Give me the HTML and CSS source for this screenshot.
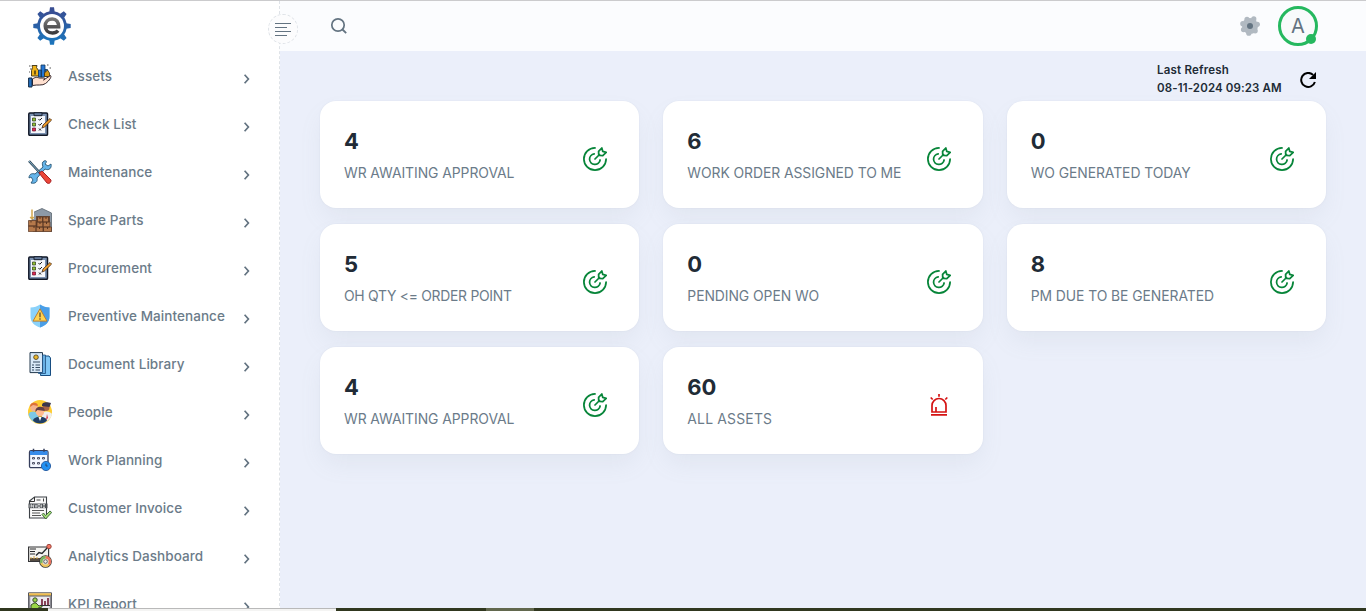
FILE: index.html
```html
<!DOCTYPE html>
<html lang="en">
<head>
<meta charset="utf-8">
<title>Dashboard</title>
<link rel="stylesheet" href="styles.css">
</head>
<body>
<svg class="defs" aria-hidden="true">
  <symbol id="target" viewBox="0 0 24 24"><g fill="none" stroke="currentColor" stroke-width="1.75" stroke-linecap="round" stroke-linejoin="round"><path d="M12 .9A11.1 11.1 0 1 0 23.1 12"/><path d="M11.2 6.9A5.3 5.3 0 1 0 17.1 13"/><path d="M12 12l4.5-4.5M15.6 4.4l3.2-3.4.9 3.3 3.5 1.1-3.4 3.2-3.2-.3-.9-.9z"/></g></symbol>
  <symbol id="checklist" viewBox="0 0 24 24"><rect x=".8" y="1" width="18.7" height="22.3" rx="1" fill="#7b92b2" stroke="#111827" stroke-width="1.5"/><path d="M3 4h14v17H3z" fill="#f5f7fb"/><path d="M6 .7h8v3H6z" fill="#647b9c" stroke="#18202e"/><path d="M4.5 6h3v3h-3zM4.5 11h3v3h-3z" fill="#96c431" stroke="#28371e" stroke-width=".7"/><path d="M4.5 16h3v3h-3z" fill="#e02b54" stroke="#641029" stroke-width=".7"/><path d="M10.5 7l1.2 1.3L14 6M10.5 12l1.2 1.3L14 11M11 16.5l2 2m0-2l-2 2" fill="none" stroke="#222" stroke-width="1"/><path d="M14 16l1-3 7-6.5 1.6 1.6-7 6.8z" fill="#f6a12b" stroke="#3a2315" stroke-width=".8"/></symbol>
  <symbol id="chevron" viewBox="0 0 8 12"><path d="M1.6 1.8l3.8 4.2-3.8 4.2" fill="none" stroke="#637381" stroke-width="1.7"/></symbol>
</svg>
<div class="app">
  <aside class="sidebar">
    <div class="brand">
      <svg class="logo" viewBox="0 0 38 38"><defs><linearGradient id="blue" x2="0" y2="1"><stop stop-color="#394c91"/><stop offset="1" stop-color="#1b75bc"/></linearGradient><linearGradient id="gray" x2="0" y2="1"><stop stop-color="#777"/><stop offset="1" stop-color="#3c3c3e"/></linearGradient></defs><g fill="url(#blue)"><circle cx="19" cy="19" r="14.8"/><path d="M16.3 5L17 .3h4l.7 4.7zM16.3 33l.7 4.7h4l.7-4.7zM5 16.3l-4.7.7v4l4.7.7zM33 16.3l4.7.7v4l-4.7.7zM7.1 10.9L4.4 7l2.8-2.8 3.9 2.9zM30.9 10.9L33.6 7l-2.8-2.8-3.9 2.9zM7.1 27.1L4.4 31l2.8 2.8 3.9-2.9zM30.9 27.1l2.7 3.9-2.8 2.8-3.9-2.9z"/></g><circle cx="19" cy="19" r="12" fill="#fff"/><path d="M12.5 19.8h13.2c.1-5-2.4-7.8-6.4-7.8-4.2 0-7.1 2.9-7.1 7s2.8 7 7.3 7c2.4 0 4.3-.8 5.6-2.3" fill="none" stroke="url(#gray)" stroke-width="3.5"/></svg>
    </div>
    <nav class="menu">
      <a class="item"><svg class="pic" viewBox="0 0 24 24"><path d="M4.5 3.5L4 1.5h5l-.5 2 2 3V12h-7V6.5z" fill="#efb31a" stroke="#3c3215" stroke-width=".9"/><path d="M10.5 6h3v7h-3zM13 1h4v12h-4zM17 5.5h2.5v7H17z" fill="#2577d6" stroke="#173756" stroke-width=".8"/><path d="M7 6.5v4" stroke="#4d3d13" stroke-width="1.6"/><path d="M16.5 9l3-3 2 3v3.5h-5z" fill="#d99a18" stroke="#3d3214" stroke-width=".8"/><path d="M4.5 15c3.5-2.5 5-1.5 7-1h4c1.5 0 1.5 2 0 2l7-4.5c1.5 1-1 5-5 8-3 2.5-8 .8-13 2z" fill="#ffe0cf" stroke="#33252a"/><path d="M.6 14H4v9H.6z" fill="#246fbe" stroke="#132b45"/><path d="M1 2h1.5M2 5h1.5M19 1h1.5M21.5 4H23M1 8h1" stroke="#555"/></svg><span class="name">Assets</span><svg class="chev"><use href="#chevron"/></svg></a>
      <a class="item"><svg class="pic"><use href="#checklist"/></svg><span class="name">Check List</span><svg class="chev"><use href="#chevron"/></svg></a>
      <a class="item"><svg class="pic" viewBox="0 0 24 24"><path d="M16 1c3-1 3 1 1 3l3 2 3-2c1 4-2 7-6 5L9 18c1 4-2 6-6 5l2-3-2-3-2 1c0-4 3-5 6-4l8-7c-1-3-1-5 1-6z" fill="#65b5ea" stroke="#275574" stroke-width=".9"/><path d="M1 1l12 13" stroke="#2e4658" stroke-width="2.5"/><path d="M1 1l12 13" stroke="#87b3ca"/><path d="M11 13l3-2 9 9c0 3-2 4-4 3z" fill="#ec4738" stroke="#a62125"/></svg><span class="name">Maintenance</span><svg class="chev"><use href="#chevron"/></svg></a>
      <a class="item"><svg class="pic" viewBox="0 0 24 24"><path d="M4 5l10-4.5L23.5 5v18.5H5z" fill="#8d99a6" stroke="#5b6670" stroke-width=".8"/><path d="M8 8h14v4H8z" fill="#6a4a36"/><path d="M8 12h14v11H8z" fill="#694228"/><g fill="#b5794b" stroke="#553422" stroke-width=".7"><path d="M9.5 9h5v5h-5zM15 9h5.5v5H15zM9 14h6v5H9zM15 14h7v5h-7zM.5 12.5H8V18H.5zM.5 18H8v5.700H.5zM8 19h7v4.700H8zM15.5 19h8v4.700h-8z"/></g><path d="M3 12.500v2M6 18v2M12 9v2M18 9v2M12 14v2M18.500 14v2M11.500 19v2M19.500 19v2" stroke="#59351f"/><path d="M4 .5V11" stroke="#fff" stroke-width="4"/><path d="M4 1.500V11m-1.800-2L4 11l1.800-2" fill="none" stroke="#d3a84f" stroke-width="1.500"/></svg><span class="name">Spare Parts</span><svg class="chev"><use href="#chevron"/></svg></a>
      <a class="item"><svg class="pic"><use href="#checklist"/></svg><span class="name">Procurement</span><svg class="chev"><use href="#chevron"/></svg></a>
      <a class="item"><svg class="pic" viewBox="0 0 24 24"><path d="M12 .5c3 2 6 3 9.500 3v9c0 6-4 9-9.500 11-5.500-2-9.500-5-9.500-11v-9c4 0 6.500-1 9.500-3z" fill="#8bd2fa"/><path d="M12 .5c3 2 6 3 9.500 3v9c0 6-4 9-9.500 11z" fill="#4a9ee7"/><path d="M12 4.800l7 12.300H5z" fill="#ffd34f" stroke="#bc7e2e" stroke-linejoin="round"/><path d="M12 8.500v4.700m0 1v1.500" stroke="#4c4131" stroke-width="1.200"/></svg><span class="name">Preventive Maintenance</span><svg class="chev"><use href="#chevron"/></svg></a>
      <a class="item"><svg class="pic" viewBox="0 0 24 24"><path d="M14 4h7l1.500 2v17.500H12.500z" fill="#7fc6f5" stroke="#174d81"/><path d="M2 .600h12.500v20H2z" fill="#d9e9f8" stroke="#23384c"/><path d="M14.500 3h3v18.500h-7v-1h4z" fill="#66aee3" stroke="#204e7d" stroke-width=".8"/><circle cx="8" cy="5.200" r="2.300" fill="#e9b62f" stroke="#463917" stroke-width=".8"/><path d="M5 10h7M4 13h2m1.500 0H12M4 15.500h2m1.500 0H12M4 18h2m1.500 0H12" stroke="#344a61" stroke-width="1.100"/></svg><span class="name">Document Library</span><svg class="chev"><use href="#chevron"/></svg></a>
      <a class="item"><svg class="pic" viewBox="0 0 24 24"><circle cx="12" cy="12" r="12" fill="#ffcd32"/><path d="M.500 14c3-4 9-3 10 3v6C6 23 1 19 .500 14z" fill="#7cc8e7"/><path d="M14 13c5-3 8-1 10 1-1 5-5 8-10 9z" fill="#eee"/><circle cx="6" cy="7.500" r="3.700" fill="#f4b28f"/><path d="M2.200 7c-1-6 9-5 7.500-1L5 5z" fill="#df7138"/><circle cx="18" cy="7.500" r="3.500" fill="#a86345"/><path d="M14 6c-.500-5 6-4 9-3l-1.500 4z" fill="#39364c"/><circle cx="12" cy="12" r="4.200" fill="#ffba91"/><path d="M7.500 12c-1-7 10-6.500 9.200-1l-7.200-1z" fill="#624047"/><path d="M5 20.500c1-5 13-5 14 0-3 4-11 4-14 0z" fill="#203e65"/><path d="M10.500 17l1.500 4 1.500-4z" fill="#fff"/><path d="M19 14l-1 6 2-2z" fill="#db3445"/></svg><span class="name">People</span><svg class="chev"><use href="#chevron"/></svg></a>
      <a class="item"><svg class="pic" viewBox="0 0 24 24"><rect x="1.500" y="2.700" width="18.500" height="17" rx="1.500" fill="#f4f7ff" stroke="#353e5c" stroke-width="1.300"/><path d="M2 3h17.500v4H2z" fill="#378bea"/><path d="M5.500.800v3M16 .800v3" stroke="#353e5c" stroke-width="1.500"/><g fill="#fff" stroke="#40435c" stroke-width=".9"><path d="M4.500 9.500h2v1.500h-2zM9.500 9.500h2v1.500h-2zM14.500 9.500h2v1.500h-2zM4.500 14.500h2V16h-2zM9.500 14.500h2V16h-2z"/></g><circle cx="18" cy="18" r="4.600" fill="#2291f3" stroke="#2e65aa"/><path d="M18 15.500V18h1.700" fill="none" stroke="#26456f"/></svg><span class="name">Work Planning</span><svg class="chev"><use href="#chevron"/></svg></a>
      <a class="item"><svg class="pic" viewBox="0 0 24 24"><path d="M1.500 5l5-4h12v21h-17z" fill="#fafafa" stroke="#3c4146" stroke-width="1.100"/><path d="M1.500 5.500h5V1" fill="none" stroke="#333"/><path d="M8.500 4h4M15.500 2.500v3" stroke="#444"/><path d="M.500 7.500h19v4.700H.500z" fill="#4c5054"/><path d="M2 8.500v3m1.500 0v-3l2 3v-3M7 8.500l1 3 1-3m1 0h2v3h-2zM13.500 8.500v3m1.500-3h2m-2 1.500h2m-2 1.500h2" fill="none" stroke="#fff" stroke-width=".65"/><path d="M4 14.500h12M4 17h8M4 19.500h9" stroke="#555"/><path d="M14 18.500l1.500-1.500 2 2.500L22 15l1.700 1.500-6 6.500z" fill="#a5de78" stroke="#355e34" stroke-width=".9"/></svg><span class="name">Customer Invoice</span><svg class="chev"><use href="#chevron"/></svg></a>
      <a class="item"><svg class="pic" viewBox="0 0 24 24"><path d="M.600 3h20v14.500H.600z" fill="#f4f4f1" stroke="#353537" stroke-width="1.200"/><path d="M2 5h6M2 7.500h5M2 10h5" stroke="#28292d" stroke-width="1.100"/><path d="M2 15.500h12" stroke="#554c43" stroke-width="3"/><path d="M3 15v-2M6 15v-3M9 15v-2" stroke="#d8a744"/><path d="M8 11.500l3-3 3 1 6-6.500" fill="none" stroke="#272a2d" stroke-width="1.400"/><circle cx="21" cy="2.500" r="2.200" fill="#f37661" stroke="#9c463e"/><circle cx="17.500" cy="17.500" r="4.500" fill="none" stroke="#333" stroke-width="3.700"/><circle cx="17.500" cy="17.500" r="4.300" fill="#ddd" stroke="#efc55d" stroke-width="2.400"/><path d="M17.500 13.200a4.300 4.300 0 0 1 3.500 7" fill="none" stroke="#ea7160" stroke-width="2.400"/><path d="M17.500 13.200a4.300 4.300 0 0 0-4 5.800" fill="none" stroke="#71b563" stroke-width="2.400"/><circle cx="17.500" cy="17.500" r="1.800" fill="#eee" stroke="#444" stroke-width=".8"/></svg><span class="name">Analytics Dashboard</span><svg class="chev"><use href="#chevron"/></svg></a>
      <a class="item"><svg class="pic" viewBox="0 0 24 24"><path d="M.500.800h23v22H.500z" fill="#eceaf0" stroke="#55545b"/><path d="M1 1.300h22v2.500H1z" fill="#f0bd4c"/><path d="M1 4h22" stroke="#555"/><path d="M22.500 4v18M1.500 4v18" stroke="#898990" stroke-width="1.500"/><circle cx="7" cy="8" r="2.200" fill="#9bd547" stroke="#394d2d"/><path d="M3 20v-7l3-2h2l3 3 3-1v2l-4 1v4z" fill="#9bd547" stroke="#394d2d"/><path d="M14 7v6M17 9v4M20 6v7" stroke="#7d3147" stroke-width="1.800"/><path d="M12.500 13.500H22" stroke="#333"/></svg><span class="name">KPI Report</span><svg class="chev"><use href="#chevron"/></svg></a>
    </nav>
  </aside>
  <section class="page">
    <header class="topbar">
      <button class="toggle" aria-label="Toggle menu"><svg width="18" height="14" viewBox="0 0 18 14"><path d="M1 .500h16M1 4.500h12M1 8.500h16M1 12.500h12" stroke="#637381" stroke-width="1.200"/></svg></button>
      <svg class="search" viewBox="0 0 18 18"><circle cx="8" cy="8" r="6.200" fill="none" stroke="#637381" stroke-width="1.700"/><path d="M12.500 12.500l3.700 3.700" stroke="#637381" stroke-width="1.800"/></svg>
      <svg class="gear" viewBox="0 0 20 20"><g fill="#b1b9c1"><circle cx="10" cy="10" r="8"/><circle cx="7" cy="3.400" r="2.600"/><circle cx="13.800" cy="2.800" r="2.600"/><circle cx="17.300" cy="8.300" r="2.600"/><circle cx="15.200" cy="14.800" r="2.600"/><circle cx="8.800" cy="17.200" r="2.600"/><circle cx="3.500" cy="13.600" r="2.600"/><circle cx="2.800" cy="7.700" r="2.600"/></g><circle cx="10" cy="10" r="3" fill="#637381"/></svg>
      <div class="avatar">A<span class="online"></span></div>
    </header>
    <main class="content">
      <div class="refresh"><div class="stamp"><div class="when">Last Refresh</div><div>08-11-2024 09:23 AM</div></div><svg class="reload" viewBox="0 0 16 16"><path d="M13.100 2.900A7 7 0 1 0 14.900 10" fill="none" stroke="#000" stroke-width="2"/><path d="M16 0v7H9z"/></svg></div>
      <div class="cards">
        <article class="card"><div class="stat"><div class="num">4</div><div class="label">WR AWAITING APPROVAL</div></div><svg class="status"><use href="#target"/></svg></article>
        <article class="card"><div class="stat"><div class="num">6</div><div class="label">WORK ORDER ASSIGNED TO ME</div></div><svg class="status"><use href="#target"/></svg></article>
        <article class="card"><div class="stat"><div class="num">0</div><div class="label">WO GENERATED TODAY</div></div><svg class="status"><use href="#target"/></svg></article>
        <article class="card"><div class="stat"><div class="num">5</div><div class="label tight">OH QTY &lt;= ORDER POINT</div></div><svg class="status"><use href="#target"/></svg></article>
        <article class="card"><div class="stat"><div class="num">0</div><div class="label">PENDING OPEN WO</div></div><svg class="status"><use href="#target"/></svg></article>
        <article class="card"><div class="stat"><div class="num">8</div><div class="label">PM DUE TO BE GENERATED</div></div><svg class="status"><use href="#target"/></svg></article>
        <article class="card"><div class="stat"><div class="num">4</div><div class="label">WR AWAITING APPROVAL</div></div><svg class="status"><use href="#target"/></svg></article>
        <article class="card"><div class="stat"><div class="num">60</div><div class="label loose">ALL ASSETS</div></div><svg class="status alarm" viewBox="0 0 24 24"><path d="M5 19v-6.500a7 7 0 0 1 14 0V19zM9 18.500v-4.500M4 21.800h16M12 1v2.700M3.700 4.500l2 2M20.300 4.500l-2 2" fill="none" stroke="currentColor" stroke-width="1.700"/></svg></article>
      </div>
    </main>
  </section>
</div>
<div class="edge"><span class="tip"></span><span class="mark"></span></div>
</body>
</html>
```
FILE: styles.css
```css
* { box-sizing: border-box; }
body { margin: 0; height: 611px; overflow: hidden; font-family: Inter, sans-serif; color: #212b36; background: #ebeffa; }
.defs { position: absolute; width: 0; height: 0; }
.app { display: flex; height: 611px; border-top: 1px solid #cbcbcd; overflow: hidden; }
.sidebar { flex: 0 0 280px; background: #fff; border-right: 1px dashed #dfe3e8; }
.brand { height: 51px; padding: 6px 0 0 33px; }
.logo { display: block; width: 38px; height: 38px; }
.item { display: flex; align-items: center; height: 48px; padding: 0 28px; color: #6b7b89; font-size: 13.5px; font-weight: 500; letter-spacing: .07px; }
.pic { flex: none; width: 24px; height: 24px; margin-right: 16px; }
.name { flex: 1; white-space: nowrap; }
.chev { flex: none; width: 8px; height: 12px; margin-top: 5px; }
.page { flex: 1; }
.topbar { position: relative; display: flex; align-items: center; height: 50px; padding: 0 48px 0 50px; background: #fbfcfe; }
.toggle { position: absolute; left: -12px; top: 13px; display: grid; place-items: center; width: 30px; height: 30px; padding: 2px 0 0; background: #fcfcfd; border: 1px dashed #dfe3e8; border-radius: 50%; }
.search { width: 18px; height: 18px; margin-right: auto; }
.gear { width: 20px; height: 20px; margin-right: 18px; }
.avatar { position: relative; display: grid; place-items: center; width: 40px; height: 40px; border: 3px solid #25b85f; border-radius: 50%; color: #637381; font-size: 20px; background: #f8fafb; }
.online { position: absolute; right: -1px; bottom: -1px; width: 10px; height: 10px; border-radius: 50%; background: #25b85f; }
.content { padding: 10px 40px; }
.refresh { display: flex; justify-content: flex-end; align-items: center; height: 36px; gap: 18px; margin: 0 10px 4px; font-size: 11.5px; line-height: 18px; font-weight: 600; letter-spacing: .13px; }
.when { letter-spacing: .22px; }
.stamp { width: 125px; white-space: nowrap; }
.reload { width: 16px; height: 16px; margin-top: 2px; }
.cards { display: grid; grid-template-columns: repeat(3, 1fr); gap: 16px 24px; }
.card { display: flex; align-items: center; justify-content: space-between; height: 107px; padding: 0 32px 0 24px; border-radius: 16px; background: #fff; box-shadow: 0 0 2px #919eab24, 0 12px 24px -4px #919eab20; }
.stat { padding-top: 3px; }
.num { font-size: 22px; line-height: 34px; font-weight: 700; }
.label { font-size: 13.9px; line-height: 30px; color: #6b7b89; white-space: nowrap; letter-spacing: -.06px; }
.tight { letter-spacing: -.27px; }
.loose { letter-spacing: .2px; }
.status { flex: none; width: 24px; height: 24px; margin-top: 9px; color: #078539; }
.alarm { color: #d51313; }
.edge { position: fixed; left: 0; right: 0; bottom: 0; display: flex; height: 3px; background: #30371f; }
.tip { width: 288px; margin-left: 48px; background: #f4f4f3; border-top: 1px solid #b9b9b9; }
.mark { width: 48px; margin-left: 150px; background: #62684e; }
```
